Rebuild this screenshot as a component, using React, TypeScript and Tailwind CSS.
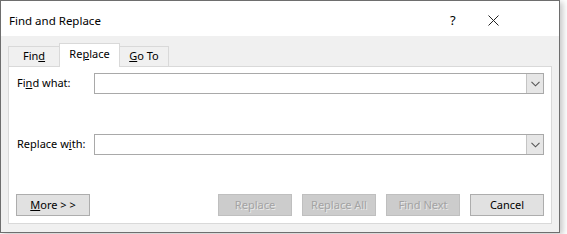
import React from "react";

function Chevron() {
  return (
    <svg width="9" height="6" viewBox="0 0 9 6" className="block">
      <path d="M0.5 0.8 L4.5 4.8 L8.5 0.8" fill="none" stroke="#555" strokeWidth="1.1" />
    </svg>
  );
}

function Combo() {
  return (
    <div className="flex h-[21px] flex-1 border border-[#a9a9a9] bg-white">
      <div className="flex-1" />
      <div className="flex w-[17px] items-center justify-center border-l border-[#c4c4c4] bg-[#e6e6e6]">
        <Chevron />
      </div>
    </div>
  );
}

function Btn({ children, disabled }: { children: React.ReactNode; disabled?: boolean }) {
  return (
    <button
      type="button"
      className={
        disabled
          ? "h-[22px] w-[74px] border border-[#bfbfbf] bg-[#cccccc] text-[11px] text-[#a3a3a3] [text-shadow:1px_1px_0_#e8e8e8]"
          : "h-[22px] w-[74px] border border-[#adadad] bg-[#e1e1e1] text-[11px] text-black"
      }
    >
      {children}
    </button>
  );
}

export default function App() {
  return (
    <div className="h-[234px] w-[567px] bg-white font-['Segoe_UI','Noto_Sans',sans-serif] text-[11px] text-black">
      <div className="flex h-[233px] w-[560px] flex-col border border-[#6e6e6e] bg-[#f0f0f0] shadow-[3px_2px_6px_rgba(0,0,0,0.22)]">
        <div className="flex h-[35px] shrink-0 items-center bg-white pl-[8px] pt-[4px] text-[11.5px]">
          <span className="flex-1">Find and Replace</span>
          <span className="w-[38px] text-[13px]">?</span>
          <svg width="11" height="11" viewBox="0 0 11 11" className="mr-[60px]">
            <path d="M0.5 0.5 L10.5 10.5 M10.5 0.5 L0.5 10.5" stroke="#222" strokeWidth="1" />
          </svg>
        </div>

        <div className="flex items-end pl-[7px] pt-[7px]">
          <div className="-mb-px flex h-[21px] w-[51px] items-center justify-center border border-r-0 border-[#d9d9d9] bg-[#f0f0f0]">
            Fin<span className="underline">d</span>
          </div>
          <div className="relative z-10 -mb-px flex h-[24px] w-[61px] items-center justify-center border border-b-0 border-[#d9d9d9] bg-white pb-[2px]">
            Re<span className="underline">p</span>lace
          </div>
          <div className="-mb-px flex h-[21px] w-[49px] items-center justify-center border border-l-0 border-[#d9d9d9] bg-[#f0f0f0]">
            <span className="underline">G</span>o To
          </div>
        </div>

        <div className="mx-[7px] mb-[8px] flex flex-1 flex-col border border-[#d9d9d9] bg-white pb-[7px] pl-[7px] pr-[7px] pt-[6px]">
          <div className="flex items-center">
            <span className="ml-[1px] w-[77px]">
              Fi<span className="underline">n</span>d what:
            </span>
            <Combo />
          </div>
          <div className="mt-[40px] flex items-center">
            <span className="ml-[1px] w-[77px]">
              Replace w<span className="underline">i</span>th:
            </span>
            <Combo />
          </div>
          <div className="mt-auto flex items-center">
            <Btn>
              <span className="underline">M</span>ore &gt; &gt;
            </Btn>
            <div className="flex-1" />
            <div className="flex gap-[10px]">
              <Btn disabled>Replace</Btn>
              <Btn disabled>Replace All</Btn>
              <Btn disabled>Find Next</Btn>
              <Btn>Cancel</Btn>
            </div>
          </div>
        </div>
      </div>
    </div>
  );
}
